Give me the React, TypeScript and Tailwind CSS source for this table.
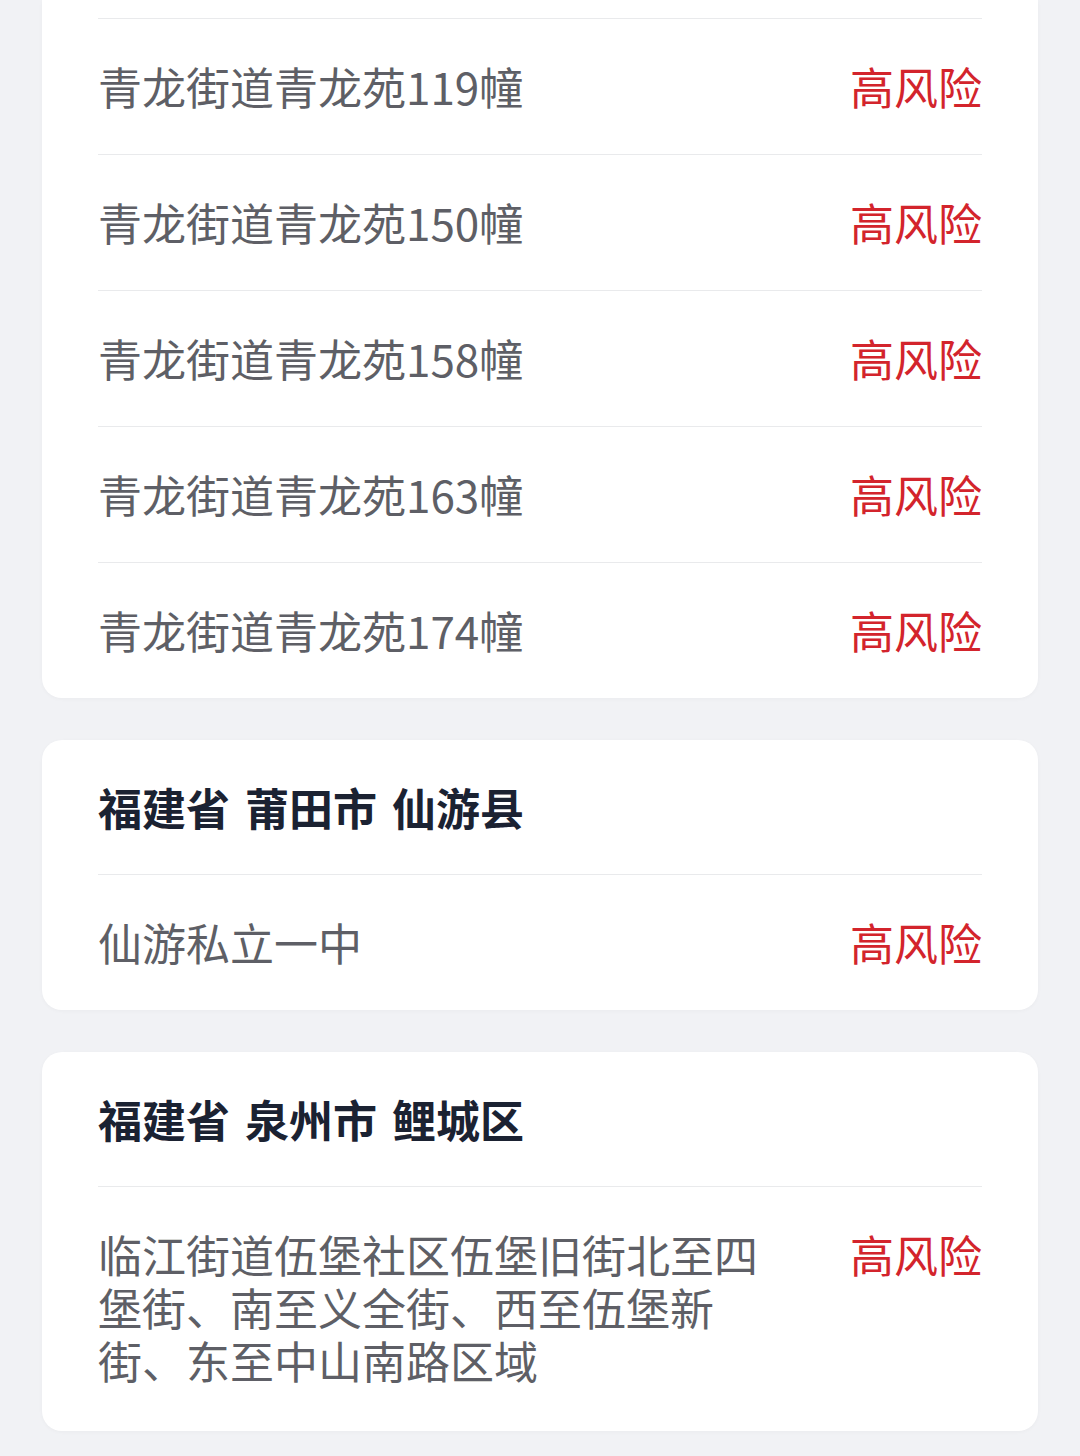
import React from 'react'

interface Area {
  title?: string
  places: string[]
}

const AREAS: Area[] = [
  {
    places: [
      '青龙街道青龙苑119幢',
      '青龙街道青龙苑150幢',
      '青龙街道青龙苑158幢',
      '青龙街道青龙苑163幢',
      '青龙街道青龙苑174幢',
    ],
  },
  {
    title: '福建省 莆田市 仙游县',
    places: ['仙游私立一中'],
  },
  {
    title: '福建省 泉州市 鲤城区',
    places: [
      '临江街道伍堡社区伍堡旧街北至四堡街、南至义全街、西至伍堡新街、东至中山南路区域',
    ],
  },
]

const PlaceRow: React.FC<{ name: string }> = ({ name }) => {
  const multi = name.length > 15
  return (
    <div
      className={`flex border-t border-[#e9eaec] ${
        multi ? 'items-start pt-[41px] pb-[44px]' : 'h-[136px] items-center'
      }`}
    >
      <div className="flex-1 pr-[80px] text-[44px] leading-[53px] text-[#5e5f66]">
        {name}
      </div>
      <div className="shrink-0 text-[44px] leading-[53px] text-[#d3242c]">
        高风险
      </div>
    </div>
  )
}

export default function App() {
  return (
    <div
      className="min-h-screen bg-[#f1f2f5] px-[42px] pb-[40px]"
      style={{ fontFamily: '"Noto Sans CJK SC", "Noto Sans", sans-serif' }}
    >
      <div className="flex flex-col gap-[42px]">
        {AREAS.map((area, i) => (
          <div
            key={i}
            className={`bg-white px-[56px] shadow-[0_1px_4px_rgba(0,0,0,0.03)] ${
              area.title ? 'rounded-[20px]' : 'rounded-b-[20px] pt-[18px]'
            }`}
          >
            {area.title && (
              <div className="flex h-[134px] items-center text-[44px] font-bold text-[#1b2232] [word-spacing:5px]">
                {area.title}
              </div>
            )}
            {area.places.map(p => (
              <PlaceRow key={p} name={p} />
            ))}
          </div>
        ))}
      </div>
    </div>
  )
}
